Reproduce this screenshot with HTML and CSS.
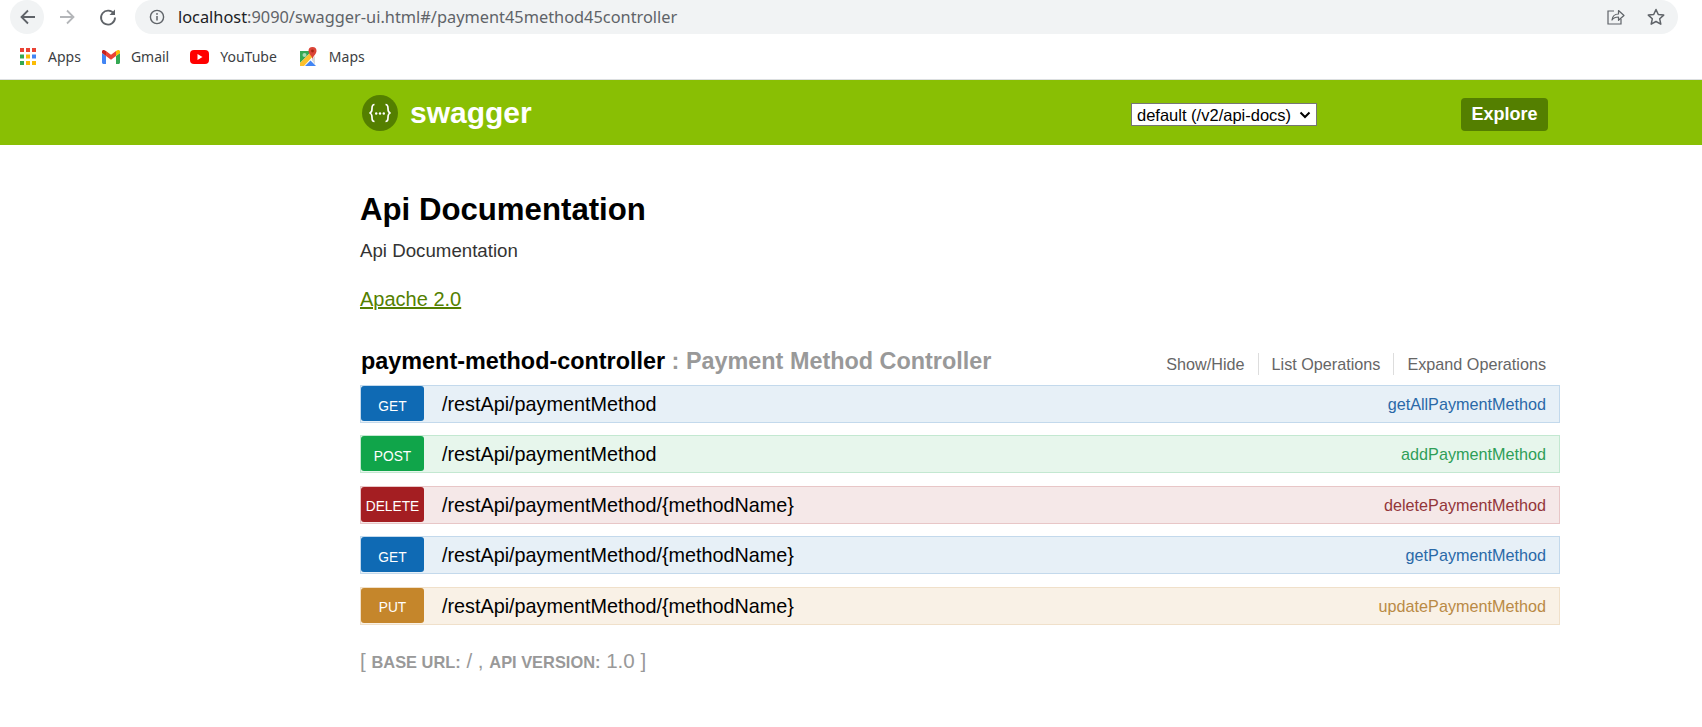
FILE: index.html
```html
<!DOCTYPE html>
<html lang="en">
<head>
<meta charset="utf-8">
<title>Swagger UI</title>
<link rel="stylesheet" href="styles.css">
</head>
<body>
<div class="toolbar">
  <span class="nav-btn nav-back"><svg width="20" height="20" viewBox="0 0 20 20"><path d="M17 10H4M10 3.5 3.5 10l6.500 6.500" fill="none" stroke="#5f6368" stroke-width="1.800"/></svg></span>
  <span class="nav-btn nav-fwd"><svg width="20" height="20" viewBox="0 0 20 20"><path d="M3 10h13M10 3.500l6.500 6.500-6.500 6.500" fill="none" stroke="#b4b6b9" stroke-width="1.800"/></svg></span>
  <span class="nav-btn nav-reload"><svg width="20" height="20" viewBox="0 0 20 20"><path d="M16 7A7 7 0 1 0 17 10.500" fill="none" stroke="#5f6368" stroke-width="1.800"/><path d="M17 2.500V8h-5.500z" fill="#5f6368"/></svg></span>
  <div class="omnibox">
    <svg class="info" width="16" height="16" viewBox="0 0 16 16"><circle cx="8" cy="8" r="6.600" fill="none" stroke="#5f6368" stroke-width="1.400"/><path d="M8 7v4.500" stroke="#5f6368" stroke-width="1.500"/><circle cx="8" cy="4.900" r=".95" fill="#5f6368"/></svg>
    <span class="url"><span class="host">localhost</span>:9090/swagger-ui.html#/payment45method45controller</span>
    <svg class="share" width="20" height="20" viewBox="0 0 20 20"><path d="M9 4H3v13h13v-5" fill="none" stroke="#5f6368" stroke-width="1.200"/><path d="M7 13c.500-4 3-6 6.500-6V3.500L19 8.500l-5.500 4.800V10c-2.800 0-5 .8-6.500 3z" fill="none" stroke="#5f6368" stroke-width="1.200" stroke-linejoin="round"/></svg>
    <svg class="star" width="20" height="20" viewBox="0 0 20 20"><path d="m10 2.500 2.300 5 5.400.6-4 3.700 1.100 5.400-4.800-2.700-4.800 2.700 1.100-5.400-4-3.700 5.400-.6z" fill="none" stroke="#5f6368" stroke-width="1.500" stroke-linejoin="round"/></svg>
  </div>
</div>
<div class="bookmarks">
  <svg class="bm-apps" width="16" height="17" viewBox="0 0 16 17">
    <rect x="0" y="0" width="4" height="4" fill="#ea4335"/><rect x="6" y="0" width="4" height="4" fill="#ea4335"/><rect x="12" y="0" width="4" height="4" fill="#ea4335"/>
    <rect x="0" y="6.500" width="4" height="4" fill="#34a853"/><rect x="6" y="6.500" width="4" height="4" fill="#fbbc04"/><rect x="12" y="6.500" width="4" height="4" fill="#4285f4"/>
    <rect x="0" y="13" width="4" height="4" fill="#34a853"/><rect x="6" y="13" width="4" height="4" fill="#fbbc04"/><rect x="12" y="13" width="4" height="4" fill="#fbbc04"/>
  </svg>
  <span class="bm-text bm-t1">Apps</span>
  <svg class="bm-gmail" width="18" height="14" viewBox="0 0 18 14">
    <path d="M0 3v9.500c0 .8.700 1.500 1.500 1.500H4V6z" fill="#4285f4"/>
    <path d="M14 6v8h2.500c.8 0 1.500-.7 1.500-1.500V3z" fill="#34a853"/>
    <path d="M14 1v5l4-3V1.500C18 .2 16.500-.5 15.500.3z" fill="#fbbc04"/>
    <path d="M4 6V1l5 3.700L14 1v5L9 9.700z" fill="#ea4335"/>
    <path d="M0 1.500V3l4 3V1L2.500.3C1.500-.5 0 .2 0 1.500z" fill="#c5221f"/>
  </svg>
  <span class="bm-text bm-t2">Gmail</span>
  <svg class="bm-yt" width="19" height="14" viewBox="0 0 19 14"><rect width="19" height="14" rx="4" fill="#f00"/><path d="M7.500 4v6l5-3z" fill="#fff"/></svg>
  <span class="bm-text bm-t3">YouTube</span>
  <svg class="bm-maps" width="19" height="20" viewBox="0 0 19 20">
    <path d="M1 4h12L1 16z" fill="#34a853"/>
    <path d="M1 16 13 4l3 3L5 19H1z" fill="#fbc02d"/>
    <path d="M6 19l5.500-5.500L17 19z" fill="#4285f4"/>
    <path d="M12.500 12.500 16 9v8.500z" fill="#d5d8da"/>
    <circle cx="5.500" cy="8" r="2" fill="#a8dab5"/>
    <path d="M13.500 0a4 4 0 0 0-4 4c0 3 4 5.500 4 8.500 0-3 4-5.500 4-8.500a4 4 0 0 0-4-4z" fill="#db4437"/>
    <circle cx="13.500" cy="4" r="1.400" fill="#a52714"/>
  </svg>
  <span class="bm-text">Maps</span>
</div>
<header class="site-header">
  <div class="brand">
    <svg class="logo" width="36" height="36" viewBox="0 0 36 36">
      <circle cx="18" cy="18" r="18" fill="#547f00"/>
      <path d="M12.500 9.500c-2.500 0-2.500 2-2.500 4s0 4-2.500 4.500c2.500 .5 2.500 2.500 2.500 4.500s0 4 2.500 4M23.500 9.500c2.500 0 2.500 2 2.500 4s0 4 2.500 4.500c-2.500 .5-2.500 2.500-2.500 4.500s0 4-2.500 4" fill="none" stroke="#fff" stroke-width="1.700"/>
      <circle cx="14.200" cy="18.500" r="1.200" fill="#fff"/><circle cx="18" cy="18.500" r="1.200" fill="#fff"/><circle cx="21.800" cy="18.500" r="1.200" fill="#fff"/>
    </svg>
    <span class="brand-name">swagger</span>
  </div>
  <select class="spec-select"><option>default (/v2/api-docs)</option></select>
  <a class="explore" href="#">Explore</a>
</header>
<main class="content">
  <h1 class="title">Api Documentation</h1>
  <p class="desc">Api Documentation</p>
  <a class="license" href="#">Apache 2.0</a>
  <div class="resource-head">
    <h2 class="resource-title">payment-method-controller <span class="resource-sub">: Payment Method Controller</span></h2>
    <ul class="toggles">
      <li>Show/Hide</li>
      <li>List Operations</li>
      <li>Expand Operations</li>
    </ul>
  </div>
  <div class="ops">
    <div class="op op-get"><span class="verb">GET</span><span class="path">/restApi/paymentMethod</span><span class="nick">getAllPaymentMethod</span></div>
    <div class="op op-post"><span class="verb">POST</span><span class="path">/restApi/paymentMethod</span><span class="nick">addPaymentMethod</span></div>
    <div class="op op-delete"><span class="verb">DELETE</span><span class="path">/restApi/paymentMethod/{methodName}</span><span class="nick">deletePaymentMethod</span></div>
    <div class="op op-get"><span class="verb">GET</span><span class="path">/restApi/paymentMethod/{methodName}</span><span class="nick">getPaymentMethod</span></div>
    <div class="op op-put"><span class="verb">PUT</span><span class="path">/restApi/paymentMethod/{methodName}</span><span class="nick">updatePaymentMethod</span></div>
  </div>
  <p class="base">[ <span class="base-label">BASE URL:</span> / , <span class="base-label">API VERSION:</span> 1.0 ]</p>
</main>
</body>
</html>
```
FILE: styles.css
```css
* { box-sizing: border-box; }
html, body { margin: 0; padding: 0; background: #fff; }
body { font-family: "Liberation Sans", Arial, sans-serif; height: 727px; overflow: hidden; }

.toolbar { display: flex; align-items: center; height: 34px; padding-left: 10px; }
.nav-btn { display: flex; align-items: center; justify-content: center; width: 34px; height: 34px; border-radius: 50%; flex: none; }
.nav-back { background: #f1f3f4; padding-left: 2px; }
.nav-fwd { margin-left: 6px; }
.nav-reload { margin-left: 6px; padding-left: 2px; }
.omnibox { display: flex; align-items: center; height: 34px; width: 1543px; margin-left: 11px; padding: 0 12px 0 14px; background: #f1f3f4; border-radius: 17px; }
.info { flex: none; }
.url { margin-left: 13px; font: 16.350px "Noto Sans", sans-serif; color: #5f6368; white-space: nowrap; flex: 1; }
.host { color: #202124; }
.share { flex: none; margin-right: 21px; }
.star { flex: none; }

.bookmarks { display: flex; align-items: center; height: 46px; padding-left: 20px; border-bottom: 1px solid #dcdfe0; }
.bm-text { font: 14px "Noto Sans", sans-serif; color: #3c4043; margin-left: 11px; }
.bm-t1 { margin-left: 12px; margin-right: 21px; }
.bm-t2 { margin-right: 21px; }
.bm-t3 { margin-right: 22px; }

.site-header { display: flex; align-items: center; height: 65px; padding: 0 154px 0 362px; background: #89bf04; }
.brand { display: flex; align-items: center; flex: 1; }
.logo { flex: none; }
.brand-name { margin-left: 12px; font-size: 30px; font-weight: 700; color: #fff; }
.spec-select { appearance: none; width: 186px; height: 23px; margin: 4px 144px 0 0; font: 16.500px "Liberation Sans", Arial, sans-serif; color: #000; border: 1px solid #767676; border-radius: 0; padding: 0 0 0 5px; background: #fff url("data:image/svg+xml,%3Csvg xmlns='http://www.w3.org/2000/svg' width='12' height='8' viewBox='0 0 12 8'%3E%3Cpath d='M1.500 1.500 6 6l4.500-4.500' fill='none' stroke='%23000' stroke-width='2'/%3E%3C/svg%3E") no-repeat 167px 7px; }
.explore { display: flex; align-items: center; justify-content: center; width: 87px; height: 33px; margin-top: 4px; background: #547f00; border-radius: 4px; color: #fff; font-size: 18px; font-weight: 700; text-decoration: none; }

.content { width: 1200px; margin-left: 360px; padding-top: 46px; }
.title { margin: 0; font-size: 31.200px; line-height: 38px; font-weight: 700; color: #000; }
.desc { margin: 10px 0 0; font-size: 18.700px; line-height: 24px; color: #333; }
.license { display: block; width: max-content; margin-top: 24px; font-size: 20px; line-height: 24px; color: #547f00; text-decoration: underline; }

.resource-head { display: flex; justify-content: space-between; align-items: flex-start; height: 39px; margin-top: 35px; padding-left: 1px; }
.resource-title { margin: 0; font-size: 23.400px; line-height: 30px; font-weight: 700; color: #000; }
.resource-sub { color: #999; }
.toggles { display: flex; margin: 7px 14px 0 0; padding: 0; list-style: none; font-size: 16.200px; line-height: 22px; color: #666; }
.toggles li { padding: 0 13px; border-right: 1px solid #ddd; }
.toggles li:last-child { padding-right: 0; border-right: 0; }

.ops { display: flex; flex-direction: column; gap: 12.400px; }
.op { display: flex; height: 38px; padding: 0 13px 1px 0; border: 1px solid; align-items: stretch; }
.verb { flex: none; display: flex; align-items: center; justify-content: center; width: 63px; padding-top: 5px; border-radius: 3px; color: #fff; font-size: 13.750px; }
.path { flex: 1; padding-left: 18px; font-size: 19.800px; line-height: 36px; color: #000; }
.nick { font-size: 16.200px; line-height: 36px; }

.op-get { background: #e7f0f7; border-color: #c3d9ec; }
.op-get .verb { background: #0f6ab4; }
.op-get .nick { color: #2a69a8; }
.op-post { background: #e7f6ec; border-color: #c3e8d1; }
.op-post .verb { background: #10a54a; }
.op-post .nick { color: #2e9e58; }
.op-delete { background: #f5e8e8; border-color: #e8c6c7; }
.op-delete .verb { background: #a41e22; }
.op-delete .nick { color: #93363a; }
.op-put { background: #f9f1e6; border-color: #f0e0ca; }
.op-put .verb { background: #c5862b; }
.op-put .nick { color: #b98a45; }

.base { margin: 24px 0 0; font-size: 20.600px; line-height: 24px; color: #999; }
.base-label { font-size: 16.400px; font-weight: 700; }
```
